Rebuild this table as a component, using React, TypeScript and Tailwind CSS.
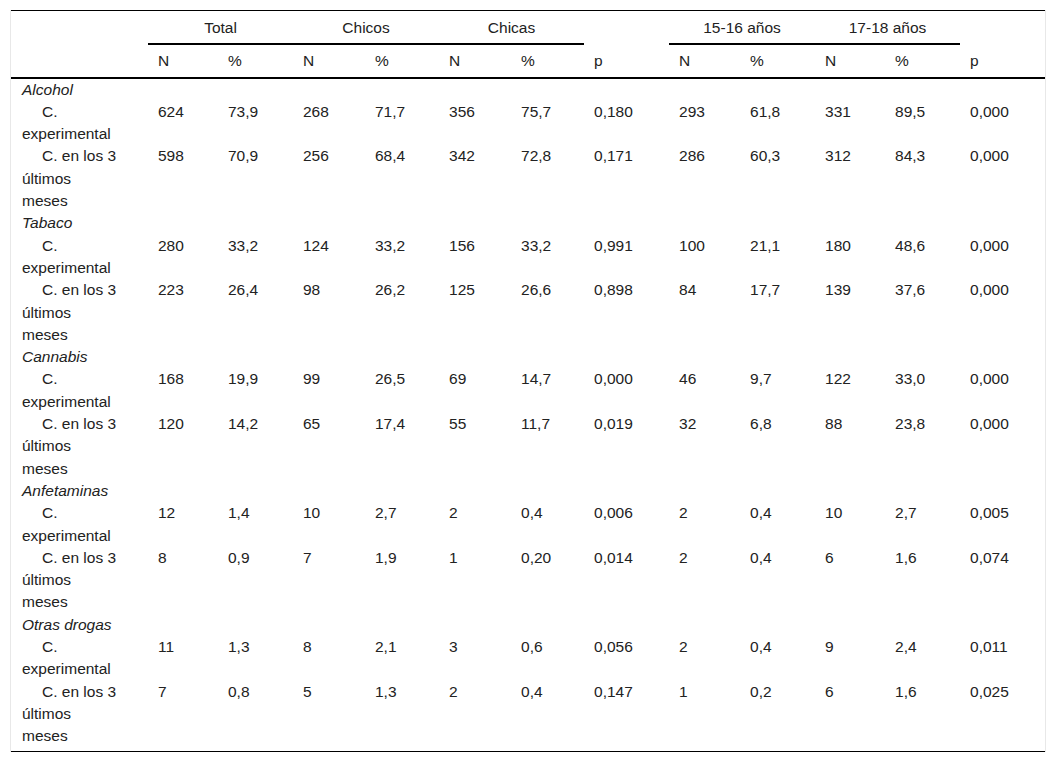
import React from "react";

type Row = { label: string[]; cat?: boolean; v?: string[] };

const groups: { name: string; rows: string[][] }[] = [
  {
    name: "Alcohol",
    rows: [
      ["624", "73,9", "268", "71,7", "356", "75,7", "0,180", "293", "61,8", "331", "89,5", "0,000"],
      ["598", "70,9", "256", "68,4", "342", "72,8", "0,171", "286", "60,3", "312", "84,3", "0,000"],
    ],
  },
  {
    name: "Tabaco",
    rows: [
      ["280", "33,2", "124", "33,2", "156", "33,2", "0,991", "100", "21,1", "180", "48,6", "0,000"],
      ["223", "26,4", "98", "26,2", "125", "26,6", "0,898", "84", "17,7", "139", "37,6", "0,000"],
    ],
  },
  {
    name: "Cannabis",
    rows: [
      ["168", "19,9", "99", "26,5", "69", "14,7", "0,000", "46", "9,7", "122", "33,0", "0,000"],
      ["120", "14,2", "65", "17,4", "55", "11,7", "0,019", "32", "6,8", "88", "23,8", "0,000"],
    ],
  },
  {
    name: "Anfetaminas",
    rows: [
      ["12", "1,4", "10", "2,7", "2", "0,4", "0,006", "2", "0,4", "10", "2,7", "0,005"],
      ["8", "0,9", "7", "1,9", "1", "0,20", "0,014", "2", "0,4", "6", "1,6", "0,074"],
    ],
  },
  {
    name: "Otras drogas",
    rows: [
      ["11", "1,3", "8", "2,1", "3", "0,6", "0,056", "2", "0,4", "9", "2,4", "0,011"],
      ["7", "0,8", "5", "1,3", "2", "0,4", "0,147", "1", "0,2", "6", "1,6", "0,025"],
    ],
  },
];

const widths = [137, 70, 75, 72, 74, 72, 73, 85, 71, 75, 70, 75, 85];

export default function App() {
  const rows: Row[] = [];
  groups.forEach((g) => {
    rows.push({ label: [g.name], cat: true });
    rows.push({ label: ["C.", "experimental"], v: g.rows[0] });
    rows.push({ label: ["C. en los 3", "últimos", "meses"], v: g.rows[1] });
  });

  return (
    <div className="bg-white p-[10px]" style={{ fontFamily: '"Liberation Sans", Arial, sans-serif' }}>
      <div className="border-x border-[#e8e8e8]">
        <table className="w-[1034px] table-fixed border-collapse border-t border-b border-black text-[15.5px] leading-[22.3px] text-[#222]">
          <colgroup>
            {widths.map((w, i) => (
              <col key={i} style={{ width: w }} />
            ))}
          </colgroup>
          <thead>
            <tr>
              <th className="pt-[6px] pb-[4px]"></th>
              <th colSpan={2} className="border-b-2 border-black pt-[6px] pb-[4px] text-center font-normal">
                Total
              </th>
              <th colSpan={2} className="border-b-2 border-black pt-[6px] pb-[4px] text-center font-normal">
                Chicos
              </th>
              <th colSpan={2} className="border-b-2 border-black pt-[6px] pb-[4px] text-center font-normal">
                Chicas
              </th>
              <th></th>
              <th colSpan={2} className="border-b-2 border-black pt-[6px] pb-[4px] text-center font-normal">
                15-16 años
              </th>
              <th colSpan={2} className="border-b-2 border-black pt-[6px] pb-[4px] text-center font-normal">
                17-18 años
              </th>
              <th></th>
            </tr>
            <tr className="border-b-2 border-black">
              <th className="pt-[5px] pb-[4px]"></th>
              {["N", "%", "N", "%", "N", "%", "p", "N", "%", "N", "%", "p"].map((h, i) => (
                <th key={i} className="pl-[10px] pt-[5px] pb-[4px] text-left font-normal">
                  {h}
                </th>
              ))}
            </tr>
          </thead>
          <tbody>
            {rows.map((r, i) => (
              <tr key={i} className="align-top">
                {r.cat ? (
                  <td className="pl-[11px] italic">{r.label[0]}</td>
                ) : (
                  <td className="pl-[11px]">
                    {r.label.map((l, k) => (
                      <div key={k} className={k === 0 ? "pl-[20px]" : ""}>
                        {l}
                      </div>
                    ))}
                  </td>
                )}
                {r.cat
                  ? Array.from({ length: 12 }).map((_, j) => <td key={j}></td>)
                  : r.v!.map((v, j) => (
                      <td key={j} className="pl-[10px]">
                        {v}
                      </td>
                    ))}
              </tr>
            ))}
            <tr>
              <td colSpan={13} className="h-[4px] p-0"></td>
            </tr>
          </tbody>
        </table>
      </div>
    </div>
  );
}
